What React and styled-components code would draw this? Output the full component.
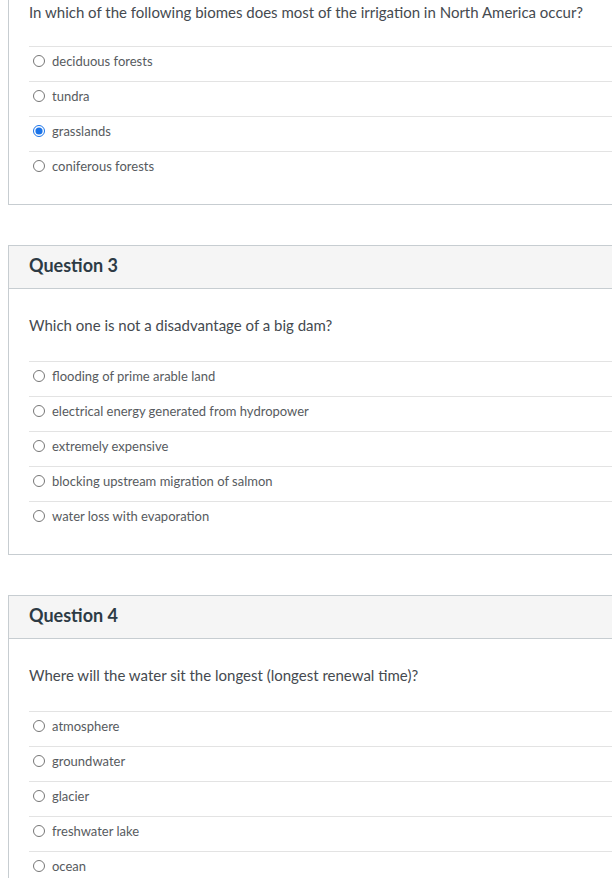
import React from 'react';
import styled, { createGlobalStyle } from 'styled-components';

const GlobalStyle = createGlobalStyle`
  html, body {
    margin: 0;
    padding: 0;
    background: #ffffff;
    overflow: hidden;
  }
  body {
    font-family: Lato, "Noto Sans", "Liberation Sans", sans-serif;
    color: #2d3b45;
  }
`;

const Page = styled.div`
  padding-left: 8px;
  display: flex;
  flex-direction: column;
  gap: 40px;
`;

const Card = styled.section`
  border: 1px solid #c7cdd1;
  border-top: ${(props) => (props.$cropped ? 'none' : '1px solid #c7cdd1')};
  margin-right: -30px;
  background: #ffffff;
`;

const Header = styled.header`
  height: 43px;
  box-sizing: border-box;
  display: flex;
  align-items: center;
  padding: 0 20px 4px;
  background: #f5f5f5;
  border-bottom: 1px solid #c7cdd1;
`;

const Title = styled.h2`
  margin: 0;
  font-size: 18px;
  line-height: 22px;
  font-weight: 700;
  color: #2d3b45;
`;

const Body = styled.div`
  padding: ${(props) => (props.$cropped ? '2px' : '26px')} 0 18px 20px;
`;

const Prompt = styled.p`
  margin: 0;
  font-size: 15px;
  line-height: 20px;
  color: #454a50;
`;

const AnswerList = styled.div`
  margin-top: ${(props) => (props.$cropped ? '24px' : '26px')};
  display: flex;
  flex-direction: column;
`;

const AnswerRow = styled.label`
  display: flex;
  align-items: center;
  padding: 5px 0 11px;
  border-top: 1px solid #e3e3e3;
  font-size: 13px;
  line-height: 18px;
  color: #575b60;
`;

const Radio = styled.input`
  width: 12px;
  height: 12px;
  margin: 0 7px 0 4px;
  accent-color: #1a73e8;
`;

const questions = [
  {
    cropped: true,
    prompt: 'In which of the following biomes does most of the irrigation in North America occur?',
    answers: ['deciduous forests', 'tundra', 'grasslands', 'coniferous forests'],
    picked: 2,
  },
  {
    title: 'Question 3',
    prompt: 'Which one is not a disadvantage of a big dam?',
    answers: [
      'flooding of prime arable land',
      'electrical energy generated from hydropower',
      'extremely expensive',
      'blocking upstream migration of salmon',
      'water loss with evaporation',
    ],
  },
  {
    title: 'Question 4',
    prompt: 'Where will the water sit the longest (longest renewal time)?',
    answers: ['atmosphere', 'groundwater', 'glacier', 'freshwater lake', 'ocean'],
  },
];

function QuestionCard({ title, prompt, answers, picked, cropped, index }) {
  return (
    <Card $cropped={cropped}>
      {title && (
        <Header>
          <Title>{title}</Title>
        </Header>
      )}
      <Body $cropped={cropped}>
        <Prompt>{prompt}</Prompt>
        <AnswerList $cropped={cropped}>
          {answers.map((a, i) => (
            <AnswerRow key={a}>
              <Radio
                type="radio"
                name={`q${index}`}
                defaultChecked={picked === i}
              />
              {a}
            </AnswerRow>
          ))}
        </AnswerList>
      </Body>
    </Card>
  );
}

export default function App() {
  return (
    <>
      <GlobalStyle />
      <Page>
        {questions.map((q, i) => (
          <QuestionCard key={i} index={i} {...q} />
        ))}
      </Page>
    </>
  );
}
